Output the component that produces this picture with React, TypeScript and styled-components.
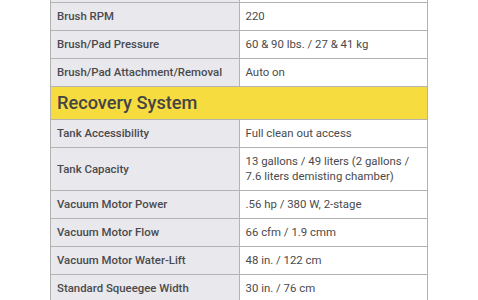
import React from 'react';
import styled, { createGlobalStyle } from 'styled-components';

type Row = { label: string; value: string } | { section: string };

const rows: Row[] = [
  { label: 'Brush RPM', value: '220' },
  { label: 'Brush/Pad Pressure', value: '60 & 90 lbs. / 27 & 41 kg' },
  { label: 'Brush/Pad Attachment/Removal', value: 'Auto on' },
  { section: 'Recovery System' },
  { label: 'Tank Accessibility', value: 'Full clean out access' },
  { label: 'Tank Capacity', value: '13 gallons / 49 liters (2 gallons / 7.6 liters demisting chamber)' },
  { label: 'Vacuum Motor Power', value: '.56 hp / 380 W, 2-stage' },
  { label: 'Vacuum Motor Flow', value: '66 cfm / 1.9 cmm' },
  { label: 'Vacuum Motor Water-Lift', value: '48 in. / 122 cm' },
  { label: 'Standard Squeegee Width', value: '30 in. / 76 cm' },
];

function App() {
  return (
    <>
      <GlobalStyle />
      <Page>
        <Table>
          <tbody>
            {/* previous row, scrolled mostly out of view */}
            <tr>
              <Label />
              <Value />
            </tr>
            {rows.map((row, i) =>
              'section' in row ? (
                <tr key={i}>
                  <Section colSpan={2}>{row.section}</Section>
                </tr>
              ) : (
                <tr key={i}>
                  <Label>{row.label}</Label>
                  <Value>{row.value}</Value>
                </tr>
              )
            )}
          </tbody>
        </Table>
      </Page>
    </>
  );
}

// Styles
const GlobalStyle = createGlobalStyle`
  body {
    margin: 0;
    background: #fff;
    font-family: Roboto, 'Liberation Sans', sans-serif;
    overflow: hidden;
  }
`;

const Page = styled.div`
  padding: 0 50px;
  margin-top: -26px;
`;

const Table = styled.table`
  width: 378px;
  border-collapse: collapse;
  table-layout: fixed;
  border: 1px solid #b3b3b3;
`;

const Cell = styled.td`
  width: 50%;
  height: 15px;
  border: 1px solid #b3b3b3;
  padding: 6px 5px 6px 6px;
  font-size: 11.4px;
  line-height: 15px;
  color: #4a4a4c;
  vertical-align: middle;
`;

const Label = styled(Cell)`
  background: #e9e8ec;
  font-weight: 500;
`;

const Value = styled(Cell)`
  background: #fff;
  font-weight: 400;
`;

const Section = styled.td`
  background: #f7dc40;
  border: 1px solid #b3b3b3;
  padding: 6px 6px 6px;
  font-size: 18.2px;
  line-height: 20px;
  font-weight: 500;
  color: #444446;
`;

export default App;
